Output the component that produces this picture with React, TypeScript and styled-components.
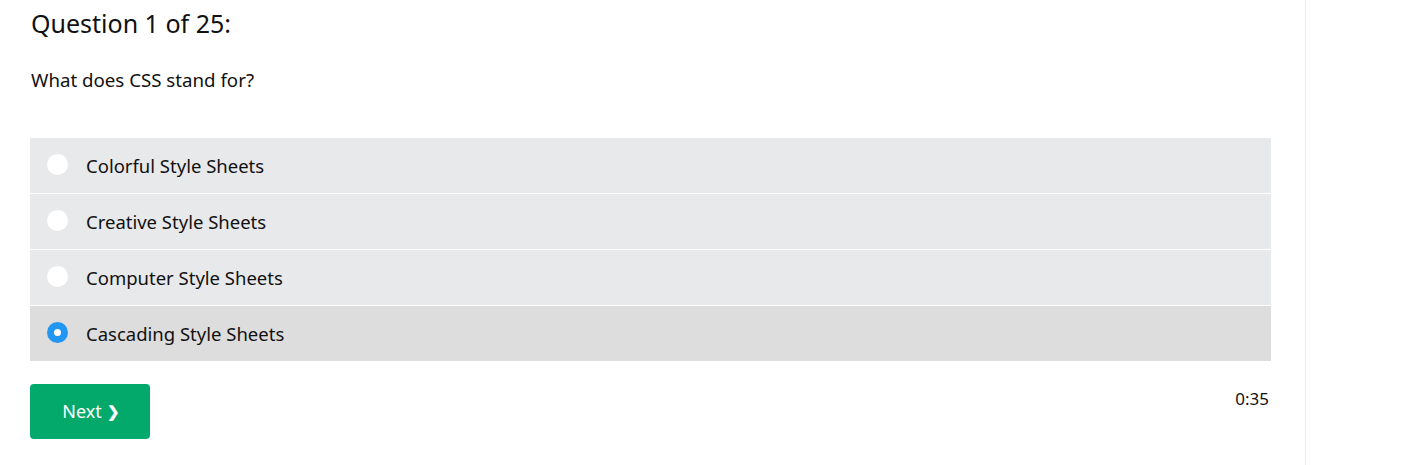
import React, { useState } from "react";
import styled, { createGlobalStyle } from "styled-components";

const GlobalStyle = createGlobalStyle`
    html, body {
        margin: 0;
        padding: 0;
        background: #ffffff;
    }
    body {
        font-family: "Noto Sans", "Open Sans", Arial, sans-serif;
        color: #111111;
    }
`;

const options = [
    "Colorful Style Sheets",
    "Creative Style Sheets",
    "Computer Style Sheets",
    "Cascading Style Sheets"
];

export default function App() {
    const [selected, setSelected] = useState(3);

    return (
        <>
            <GlobalStyle />
            <Page>
                <Main>
                    <Title>Question 1 of 25:</Title>
                    <QuestionText>What does CSS stand for?</QuestionText>
                    <OptionList>
                        {options.map((text, i) => (
                            <Option key={text} $active={selected === i} onClick={() => setSelected(i)}>
                                <Radio $checked={selected === i} />
                                <span>{text}</span>
                            </Option>
                        ))}
                    </OptionList>
                    <Footer>
                        <NextButton type="button">
                            Next <Chevron>❯</Chevron>
                        </NextButton>
                        <Timer>0:35</Timer>
                    </Footer>
                </Main>
                <Side />
            </Page>
        </>
    );
}

const Page = styled.div`
    display: flex;
    min-height: 465px;
`;

const Main = styled.div`
    width: 1306px;
    box-sizing: border-box;
    border-right: 1px solid #eeeeee;
    padding: 6px 34px 0 30px;
`;

const Side = styled.div`
    flex: 1;
`;

const Title = styled.h2`
    margin: 0 0 0 1px;
    font-size: 25px;
    font-weight: 400;
    line-height: 34px;
`;

const QuestionText = styled.p`
    margin: 26px 0 0 1px;
    font-size: 18.7px;
    line-height: 28px;
`;

const OptionList = styled.div`
    margin-top: 44px;
    display: flex;
    flex-direction: column;
    gap: 1px;
`;

const Option = styled.label<{ $active: boolean }>`
    display: flex;
    align-items: center;
    height: 55px;
    padding-left: 17px;
    background: ${(p) => (p.$active ? "#dddddd" : "#e8e9eb")};
    font-size: 18.5px;
    cursor: pointer;
`;

const Radio = styled.span<{ $checked: boolean }>`
    box-sizing: border-box;
    width: 21px;
    height: 21px;
    border-radius: 50%;
    margin-right: 18px;
    margin-top: -3px;
    background: #ffffff;
    border: ${(p) => (p.$checked ? "7px solid #2196f3" : "none")};
`;

const Footer = styled.div`
    display: flex;
    justify-content: space-between;
    align-items: flex-start;
    margin-top: 23px;
`;

const NextButton = styled.button`
    display: flex;
    align-items: center;
    justify-content: center;
    gap: 5px;
    width: 120px;
    height: 55px;
    padding: 0 0 2px 2px;
    border: 0;
    border-radius: 4px;
    background: #03a96b;
    color: #ffffff;
    font-family: inherit;
    font-size: 18px;
    cursor: pointer;
`;

const Chevron = styled.span`
    font-size: 15px;
    font-weight: 700;
`;

const Timer = styled.div`
    margin-top: 3px;
    margin-right: 2px;
    font-size: 17px;
    line-height: 24px;
`;
